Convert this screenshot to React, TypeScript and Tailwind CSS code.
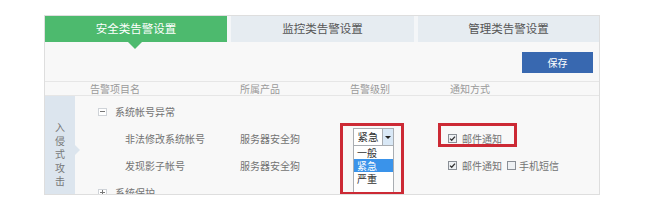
import React from "react";

const tabs = [
  { id: "security", label: "安全类告警设置", active: true },
  { id: "monitor", label: "监控类告警设置", active: false },
  { id: "manage", label: "管理类告警设置", active: false },
];

const levels = [
  { id: "normal", label: "一般", selected: false },
  { id: "urgent", label: "紧急", selected: true },
  { id: "severe", label: "严重", selected: false },
];

function CheckBox({ checked }: { checked: boolean }) {
  return (
    <svg width="9" height="9" viewBox="0 0 9 9" className="shrink-0">
      <rect x="0.5" y="0.5" width="8" height="8" fill="#eef1f4" stroke="#8a8f96" />
      {checked && (
        <path d="M2 4.6 L3.7 6.3 L7 2.6" fill="none" stroke="#333" strokeWidth="1.3" />
      )}
    </svg>
  );
}

function TreeToggle({ open }: { open: boolean }) {
  return (
    <span className="relative w-[9px] h-[8px] border border-[#cfd3d8] bg-white flex items-center justify-center shrink-0">
      <span className="w-[5px] h-px bg-[#777]" />
      {!open && <span className="absolute w-px h-[5px] bg-[#777]" />}
    </span>
  );
}

export default function App() {
  return (
    <div className="w-[659px] h-[217px] bg-white pl-[44px] pt-[15px] font-['Noto_Sans_CJK_SC',sans-serif]">
      <div className="w-[556px] h-[180px] border border-[#dedede] bg-[#f8f8f8] overflow-hidden flex flex-col">
        {/* Tabs */}
        <div className="flex h-[26px] gap-[4px] bg-[#f4f6f8] shrink-0">
          {tabs.map((tab, i) =>
            tab.active ? (
              <div
                key={tab.id}
                className="relative w-[182px] bg-[#4dba6e] text-white text-[11.5px] flex items-center justify-center"
              >
                {tab.label}
                <span className="absolute left-[83px] top-full w-0 h-0 border-x-[7px] border-x-transparent border-t-[7px] border-t-[#4dba6e]" />
              </div>
            ) : (
              <div
                key={tab.id}
                className={
                  (i === 1 ? "w-[183px] " : "flex-1 ") +
                  "bg-[#e6ecf1] text-[#555] text-[11.5px] flex items-center justify-center"
                }
              >
                {tab.label}
              </div>
            )
          )}
        </div>

        {/* Toolbar */}
        <div className="h-[39px] shrink-0 flex justify-end items-start pt-[10px] pr-[6px]">
          <button className="w-[71px] h-[21px] bg-[#3868b0] text-white text-[10px] flex items-center justify-center">
            保存
          </button>
        </div>

        {/* Table header */}
        <div className="h-[15px] shrink-0 border-y border-[#e6e6e6] flex items-center pl-[45px] text-[10px] text-[#9a9a9a]">
          <span className="w-[150px]">告警项目名</span>
          <span className="w-[110px]">所属产品</span>
          <span className="w-[100px]">告警级别</span>
          <span>通知方式</span>
        </div>

        {/* Body */}
        <div className="flex flex-1">
          <div className="relative w-[30px] bg-[#dce5ee] flex flex-col items-center justify-center text-[10px] leading-[13.5px] text-[#777] pt-[6px]">
            <span>入</span>
            <span>侵</span>
            <span>式</span>
            <span>攻</span>
            <span>击</span>
            <span className="absolute right-[-5px] top-[49px] w-0 h-0 border-y-[5px] border-y-transparent border-l-[5px] border-l-[#dce5ee]" />
          </div>

          <div className="flex-1 pt-[2px] text-[10px] text-[#737373]">
            <div className="h-[27px] flex items-center pl-[23px] gap-[8px]">
              <TreeToggle open />
              <span>系统帐号异常</span>
            </div>

            <div className="h-[27px] flex items-center pl-[50px]">
              <span className="w-[115px]">非法修改系统帐号</span>
              <span className="w-[113px]">服务器安全狗</span>
              <div className="relative w-[95px] self-stretch pt-[3px]">
                <div className="relative w-[41px]">
                  <div className="h-[18px] flex border border-[#a9adb2] bg-white">
                    <span className="flex-1 flex items-center justify-center text-[10.5px] text-[#333]">紧急</span>
                    <span className="w-[11px] bg-[#d9e8f6] border-l border-[#a9adb2] flex items-center justify-center">
                      <span className="w-0 h-0 border-x-[3px] border-x-transparent border-t-[3px] border-t-[#222]" />
                    </span>
                  </div>
                  <div className="absolute left-0 top-full w-[41px] border border-[#a9adb2] border-t-0 bg-white text-[10px] text-[#333]">
                    {levels.map((lv) => (
                      <div
                        key={lv.id}
                        className={
                          "h-[13px] px-[3px] flex items-center leading-none " +
                          (lv.selected ? "bg-[#3a93ea] text-white" : "")
                        }
                      >
                        {lv.label}
                      </div>
                    ))}
                    <div className="h-[13px]" />
                  </div>
                </div>
                <span className="absolute left-[-13px] top-[-2px] w-[64px] h-[72px] border-[3px] border-[#cc2a35]" />
              </div>
              <div className="relative flex items-center gap-[5px]">
                <CheckBox checked />
                <span>邮件通知</span>
                <span className="absolute left-[-10px] top-[-8px] w-[79px] h-[24px] border-[3px] border-[#cc2a35]" />
              </div>
            </div>

            <div className="h-[27px] flex items-center pl-[50px]">
              <span className="w-[115px]">发现影子帐号</span>
              <span className="w-[113px]">服务器安全狗</span>
              <span className="w-[95px]" />
              <div className="flex items-center gap-[5px]">
                <CheckBox checked />
                <span>邮件通知</span>
                <CheckBox checked={false} />
                <span className="-ml-[2px]">手机短信</span>
              </div>
            </div>

            <div className="h-[27px] flex items-center pl-[23px] gap-[8px]">
              <TreeToggle open={false} />
              <span>系统保护</span>
            </div>
          </div>
        </div>
      </div>
    </div>
  );
}
